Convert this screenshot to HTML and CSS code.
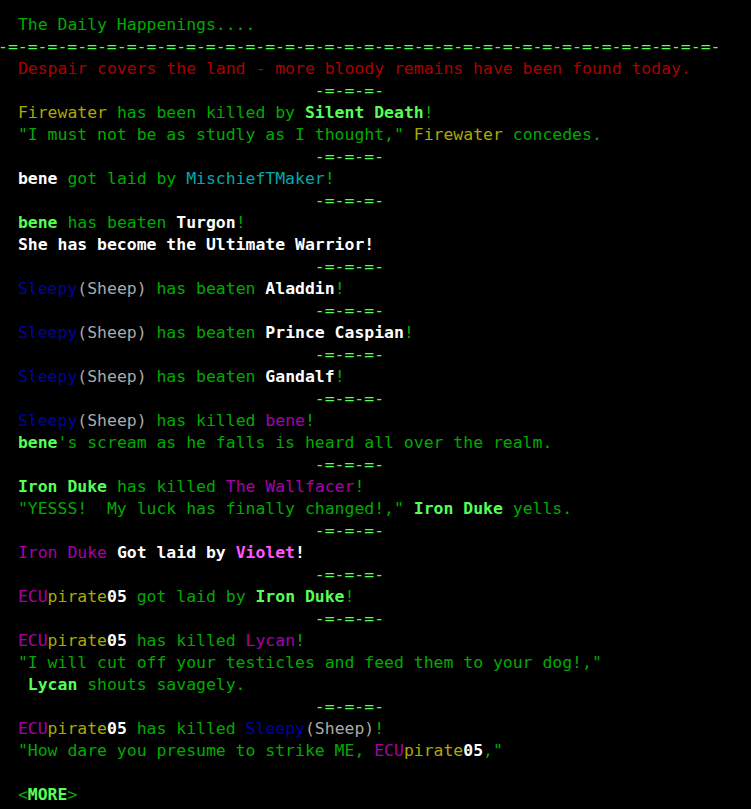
FILE: index.html
```html
<!DOCTYPE html>
<html>
<head>
<meta charset="utf-8">
<link rel="stylesheet" href="styles.css">
</head>
<body>
<pre class="term"><span class="g"> The Daily Happenings....</span>
<span class="sep-big G">-=-=-=-=-=-=-=-=-=-=-=-=-=-=-=-=-=-=-=-=-=-=-=-=-=-=-=-=-=-=-=-=-=-=-=-=-</span>
<span class="r"> Despair covers the land - more bloody remains have been found today.</span>
<span class="G">                               -=-=-=-</span>
 <span class="y">Firewater</span><span class="g"> has been killed by </span><span class="G b">Silent Death</span><span class="g">!</span>
 <span class="g">"I must not be as studly as I thought," </span><span class="y">Firewater</span><span class="g"> concedes.</span>
<span class="G">                               -=-=-=-</span>
 <span class="W b">bene</span><span class="g"> got laid by </span><span class="c">MischiefTMaker</span><span class="g">!</span>
<span class="G">                               -=-=-=-</span>
 <span class="G b">bene</span><span class="g"> has beaten </span><span class="W b">Turgon</span><span class="g">!</span>
 <span class="W b">She has become the Ultimate Warrior!</span>
<span class="G">                               -=-=-=-</span>
 <span class="bl">Sleepy</span><span class="gr">(Sheep)</span><span class="g"> has beaten </span><span class="W b">Aladdin</span><span class="g">!</span>
<span class="G">                               -=-=-=-</span>
 <span class="bl">Sleepy</span><span class="gr">(Sheep)</span><span class="g"> has beaten </span><span class="W b">Prince Caspian</span><span class="g">!</span>
<span class="G">                               -=-=-=-</span>
 <span class="bl">Sleepy</span><span class="gr">(Sheep)</span><span class="g"> has beaten </span><span class="W b">Gandalf</span><span class="g">!</span>
<span class="G">                               -=-=-=-</span>
 <span class="bl">Sleepy</span><span class="gr">(Sheep)</span><span class="g"> has killed </span><span class="m">bene</span><span class="g">!</span>
 <span class="G b">bene</span><span class="g">'s scream as he falls is heard all over the realm.</span>
<span class="G">                               -=-=-=-</span>
 <span class="G b">Iron Duke</span><span class="g"> has killed </span><span class="m">The Wallfacer</span><span class="g">!</span>
 <span class="g">"YESSS!  My luck has finally changed!," </span><span class="G b">Iron Duke</span><span class="g"> yells.</span>
<span class="G">                               -=-=-=-</span>
 <span class="m">Iron Duke</span><span class="W b"> Got laid by </span><span class="M b">Violet</span><span class="W b">!</span>
<span class="G">                               -=-=-=-</span>
 <span class="m">ECU</span><span class="y">pirate</span><span class="W b">05</span><span class="g"> got laid by </span><span class="G b">Iron Duke</span><span class="g">!</span>
<span class="G">                               -=-=-=-</span>
 <span class="m">ECU</span><span class="y">pirate</span><span class="W b">05</span><span class="g"> has killed </span><span class="m">Lycan</span><span class="g">!</span>
 <span class="g">"I will cut off your testicles and feed them to your dog!,"</span>
  <span class="G b">Lycan</span><span class="g"> shouts savagely.</span>
<span class="G">                               -=-=-=-</span>
 <span class="m">ECU</span><span class="y">pirate</span><span class="W b">05</span><span class="g"> has killed </span><span class="bl">Sleepy</span><span class="gr">(Sheep)</span><span class="g">!</span>
 <span class="g">"How dare you presume to strike ME, </span><span class="m">ECU</span><span class="y">pirate</span><span class="W b">05</span><span class="g">,"</span>

 <span class="g">&lt;</span><span class="G b">MORE</span><span class="g">&gt;</span></pre>
</body>
</html>
```
FILE: styles.css
```css
html, body {
  background: #000;
}
body {
  margin: 0;
  padding: 14px 8px 0 8px;
  overflow: hidden;
}
.term {
  margin: 0;
  font-family: "DejaVu Sans Mono", "Liberation Mono", monospace;
  font-size: 16.45px;
  line-height: 22px;
  color: #00aa00;
  white-space: pre;
}
.sep-big {
  display: inline-block;
  margin-left: -10px;
}
.b { font-weight: bold; }
.g { color: #00aa00; }
.G { color: #55ff55; }
.r { color: #aa0000; }
.y { color: #aaaa00; }
.W { color: #ffffff; }
.c { color: #00aaaa; }
.bl { color: #0000aa; }
.gr { color: #aaaaaa; }
.m { color: #aa00aa; }
.M { color: #ff55ff; }
```
